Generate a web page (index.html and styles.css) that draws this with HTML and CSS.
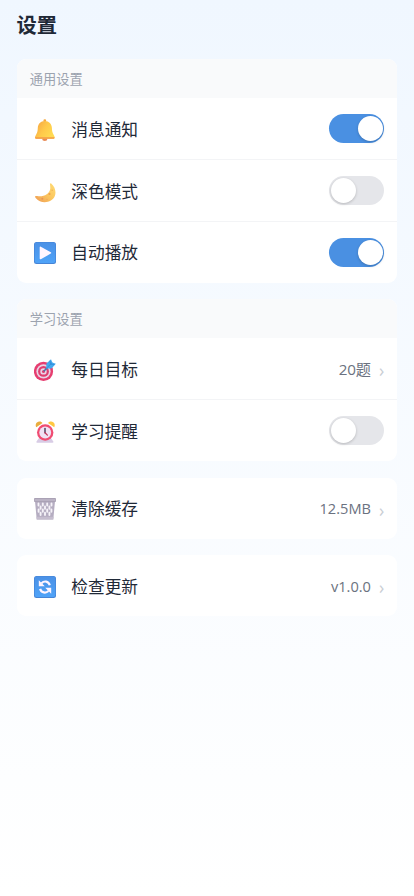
FILE: index.html
```html
<!DOCTYPE html>
<html lang="zh-CN">
<head>
<meta charset="utf-8">
<meta name="viewport" content="width=device-width, initial-scale=1">
<title>设置</title>
<link rel="stylesheet" href="styles.css">
</head>
<body>
<main class="page">
  <h1 class="title">设置</h1>

  <section class="card">
    <h2 class="card-header">通用设置</h2>
    <div class="row low">
      <svg class="icon" viewBox="0 0 22 22">
        <defs><linearGradient id="bell" x1="0" x2="1" y1="0" y2=".6"><stop offset="0" stop-color="#f5a142"/><stop offset=".55" stop-color="#ffc94a"/><stop offset="1" stop-color="#ffdb52"/></linearGradient></defs>
        <ellipse cx="10.8" cy="20" rx="2.6" ry="1.9" fill="#e88a55"/>
        <circle cx="10.8" cy="1.7" r="1.4" fill="#f6a93d"/>
        <path d="M10.800 2C6.500 2 4 5 3.800 8.800 3.700 12.500 3.200 14 1.800 16.200 1.200 17 1 18 1 18.600c0 .7.4 1.100 1 1.100h17.700c.7 0 1-.4 1-1.100 0-.8-.3-1.600-.8-2.400-1.400-2.200-1.900-3.700-2-7.400C17.700 5 15.100 2 10.800 2z" fill="url(#bell)"/>
        <path d="M1.200 18.200h19.300v.7c0 .5-.3.8-.9.8H2.100c-.6 0-.9-.3-.9-.8z" fill="#f49a48"/>
      </svg>
      <span class="label">消息通知</span>
      <span class="switch on"></span>
    </div>
    <div class="row low">
      <svg class="icon moon" viewBox="0 0 22 22">
        <defs><linearGradient id="moon" x1="0" x2="1" y1="1" y2="0"><stop offset="0" stop-color="#ee9b55"/><stop offset=".5" stop-color="#fbc65e"/><stop offset="1" stop-color="#ffdc75"/></linearGradient></defs>
        <path d="M17.200 1.500c3.700 3.200 5.200 8 3.700 12.300-2.300 6.700-13.500 9.100-19 2.400-.7-.8-.9-1.500-.7-1.900.3-.5 1.100-.4 2-.2 5.800 1.200 12.500-1.900 13.100-7.600.1-1.500-.2-2.800-.3-4 0-.8.500-1.600 1.200-1z" fill="url(#moon)"/>
        <circle cx="15.500" cy="12" r="1.100" fill="#eea04f"/><circle cx="8.300" cy="16.700" r="1" fill="#e99450"/><circle cx="18.200" cy="8.200" r=".8" fill="#f0b058"/><circle cx="13" cy="17.500" r=".7" fill="#f0a955"/>
      </svg>
      <span class="label">深色模式</span>
      <span class="switch"></span>
    </div>
    <div class="row">
      <svg class="icon" viewBox="0 0 22 22">
        <defs><linearGradient id="tile" x1="0" x2="0" y1="0" y2="1"><stop offset="0" stop-color="#4b91e6"/><stop offset="1" stop-color="#4fa3f8"/></linearGradient></defs>
        <rect width="22" height="22" rx="2.500" fill="#4584d6"/><rect x=".7" y=".4" width="20.600" height="20.600" rx="2" fill="url(#tile)"/>
        <path d="M5.700 5.300c0-.7.600-.9 1.100-.6l10 5.600c.6.400.6.900 0 1.300l-10 5.600c-.6.300-1.100 0-1.100-.6z" fill="#fff5ff"/>
      </svg>
      <span class="label">自动播放</span>
      <span class="switch on"></span>
    </div>
  </section>

  <section class="card">
    <h2 class="card-header">学习设置</h2>
    <div class="row">
      <svg class="icon" viewBox="0 0 22 22">
        <circle cx="9.500" cy="12.400" r="9.600" fill="#e63e70"/><circle cx="9.500" cy="12.400" r="7.100" fill="#e9d4e6"/><circle cx="9.500" cy="12.400" r="5.400" fill="#df3f70"/><circle cx="9.500" cy="12.400" r="3.200" fill="#e9d4e6"/><circle cx="9.500" cy="12.400" r="1.500" fill="#df3f70"/>
        <path d="M9.800 12.200l5.500-5.600" stroke="#4476ab" stroke-width="1.500"/>
        <path d="M12.200 9.600l.2-5.100L17 .2l1.300 3.300 3.500 1.300-4.200 4.700z" fill="#42a9ee"/><path d="M13.500 8.200l4.800-4.700M16 1.500l.5 3.700 4 .4" stroke="#2c7fd0" stroke-width=".6" fill="none"/>
      </svg>
      <span class="label">每日目标</span>
      <span class="value days">20题</span><span class="arrow">›</span>
    </div>
    <div class="row">
      <svg class="icon" viewBox="0 0 22 22">
        <path d="M4.500 17.500L2.500 20.500c-.5 1 .2 1.200 1 1.200h15c1 0 1.300-.5.800-1.200l-2-3z" fill="#d8cce5"/>
        <path d="M2.300 6.200C.9 4 2.200.5 5.300.4c1.400-.1 2.600.6 3.200 1.600z" fill="#e9ad3e"/><path d="M20.200 6.200C21.600 4 20.300.5 17.200.4c-1.400-.1-2.600.6-3.200 1.600z" fill="#ffc841"/>
        <circle cx="11.200" cy="11.500" r="8.200" fill="#f04c72"/><circle cx="11.200" cy="11.500" r="5.900" fill="#efe2f5"/>
        <path d="M11 7.600v4.200" stroke="#54445f" stroke-width="1.500" stroke-linecap="round"/><path d="M11 11.800l2.400 2.300" stroke="#c8355b" stroke-width="1.300" stroke-linecap="round"/>
      </svg>
      <span class="label">学习提醒</span>
      <span class="switch"></span>
    </div>
  </section>

  <section class="card">
    <div class="row">
      <svg class="icon" viewBox="0 0 22 22">
        <path d="M1 3h20l-1.700 18.600H2.700z" fill="#b5adc1"/>
        <path d="M4.500 5.500v2M8.800 5.500v2M13.200 5.500v2M17.500 5.500v2M6.600 8.500v2.200M11 8.500v2.200M15.400 8.500v2.200M4.600 11.500v2.200M8.800 11.500v2.200M13.200 11.500v2.200M17.400 11.500v2.200M6.600 14.800v2.200M11 14.800v2.200M15.400 14.800v2.200" stroke="#f5f2f8" stroke-width="1.900" stroke-linecap="round" fill="none"/>
        <path d="M2.500 18.700h17l-.3 2.900H2.800z" fill="#c5bdce"/>
        <rect x="0" y="0" width="22" height="4" rx=".9" fill="#aaa2b5"/><path d="M.6 2h20.800" stroke="#c9c2d3" stroke-width="1.200"/>
      </svg>
      <span class="label">清除缓存</span>
      <span class="value">12.5MB</span><span class="arrow">›</span>
    </div>
  </section>

  <section class="card">
    <div class="row">
      <svg class="icon" viewBox="0 0 22 22">
        <rect width="22" height="22" rx="2.500" fill="#4584d6"/><rect x=".7" y=".4" width="20.600" height="20.600" rx="2" fill="url(#tile)"/>
        <path d="M7.500 7.200C10.200 4.500 14.500 5 15.800 9.300M14.500 15C11.800 17.500 7.500 17 6.100 12.800" stroke="#fff5ff" stroke-width="2.200" fill="none"/>
        <path d="M4.800 4.200v6h6zM17.200 17.800v-6h-6z" fill="#fff5ff"/>
      </svg>
      <span class="label">检查更新</span>
      <span class="value">v1.0.0</span><span class="arrow">›</span>
    </div>
  </section>
</main>
</body>
</html>
```
FILE: styles.css
```css
* { box-sizing: border-box; }

body {
  margin: 0;
  font-family: "Open Sans", "Noto Sans CJK SC", sans-serif;
  color: #1f2937;
}

.page {
  min-height: 100vh;
  padding: 8.6px 16.56px 0;
  background: linear-gradient(180deg, #f0f7ff 0%, #ffffff 100%);
}

.title {
  margin: 0 0 16.56px;
  height: 33.4px;
  font-size: 20.3px;
  line-height: 33.4px;
  font-weight: 700;
}

.card {
  margin-bottom: 16.56px;
  border-radius: 9px;
  background: #fff;
  overflow: hidden;
}

.card-header {
  margin: 0;
  height: 39px;
  padding: 0 13.25px;
  background: #f9fafb;
  color: #9ca3af;
  font-size: 13.25px;
  line-height: 40px;
  font-weight: 400;
}

.row {
  display: flex;
  align-items: center;
  height: 62px;
  padding: 0 13.25px;
  border-bottom: 1px solid #f3f4f6;
}

.row:last-child {
  height: 61px;
  border-bottom: 0;
}

.icon {
  flex: none;
  width: 22px;
  height: 22px;
  margin: 2px 15.3px 0 4.2px;
}

.label {
  flex: 1;
  margin-top: 2px;
  font-size: 16.7px;
  line-height: 24px;
}

.low .icon,
.low .label {
  margin-top: 4px;
}

.low .moon {
  margin-top: 6px;
}

.value {
  margin-top: 0;
  color: #6b7280;
  font-size: 14.6px;
  line-height: 22px;
}

.value.days {
  font-size: 15.2px;
  letter-spacing: -.1px;
}

.arrow {
  margin: 3px 0 0 8px;
  color: #c9cdd4;
  font-size: 17.5px;
  line-height: 22px;
}

.switch {
  flex: none;
  width: 55px;
  height: 29px;
  padding: 2px 1.5px 2px 2px;
  border-radius: 15px;
  background: #e5e6ea;
}

.switch::before {
  content: "";
  display: block;
  width: 25px;
  height: 25px;
  border-radius: 50%;
  background: #fff;
  box-shadow: 0 1px 3px rgba(0, 0, 0, .2);
}

.switch.on { background: #4a90e2; }

.switch.on::before { margin-left: auto; }
```
